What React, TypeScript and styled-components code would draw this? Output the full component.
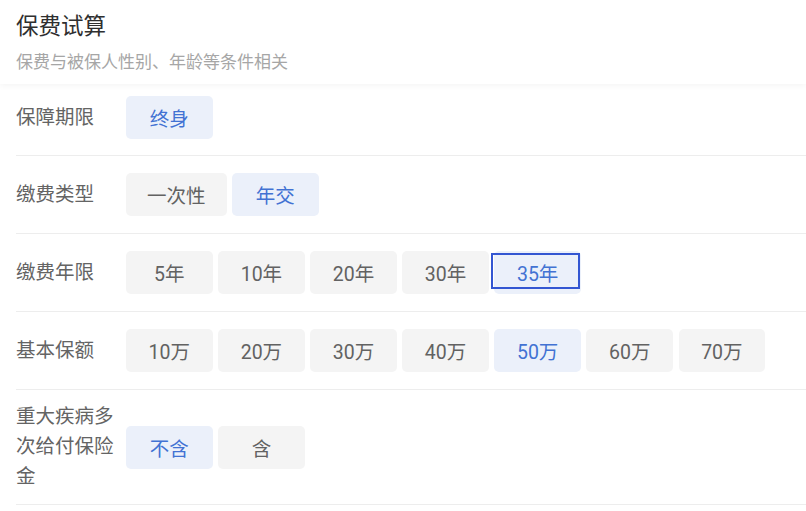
import React from "react";
import styled, { createGlobalStyle } from "styled-components";

const Global = createGlobalStyle`
  html, body { margin: 0; padding: 0; background: #fff; }
  body { font-family: Roboto, "Noto Sans CJK SC", sans-serif; }
  *, *::before, *::after { box-sizing: border-box; }
`;

const Page = styled.div`
  width: 806px;
  height: 511px;
  overflow: hidden;
  background: #fff;
`;

const Header = styled.header`
  height: 84px;
  padding: 11px 16px 0;
  box-shadow: 0 2px 6px rgba(0, 0, 0, 0.045);
  position: relative;
  z-index: 1;
`;

const Title = styled.h1`
  margin: 0;
  font-size: 22.5px;
  line-height: 30px;
  font-weight: 400;
  color: #2f2f2f;
`;

const Subtitle = styled.p`
  margin: 9px 0 0;
  font-size: 17px;
  line-height: 24px;
  color: #a6a6a6;
`;

const List = styled.div`
  padding-left: 16px;
`;

const Row = styled.div<{ $first?: boolean }>`
  display: flex;
  align-items: center;
  border-bottom: 1px solid #ededed;
  min-height: ${(p) => (p.$first ? "72px" : "78px")};
  padding: ${(p) => (p.$first ? "12px 0 16px" : "12px 0")};
`;

const Label = styled.div`
  width: 110px;
  flex: none;
  padding-right: 8px;
  font-size: 19.5px;
  line-height: 30px;
  color: #646464;
`;

const Options = styled.div`
  display: flex;
  gap: 5.5px;
`;

const Option = styled.button<{ $active?: boolean; $focused?: boolean }>`
  position: relative;
  min-width: 86.6px;
  height: 43px;
  padding: 0 21px;
  border: none;
  border-radius: 5px;
  font-family: inherit;
  font-size: 19.5px;
  color: ${(p) => (p.$active ? "#4272d3" : "#626262")};
  background: ${(p) => (p.$active ? "#ebf0fa" : "#f4f4f4")};
  cursor: pointer;
  &::after {
    content: "";
    display: ${(p) => (p.$focused ? "block" : "none")};
    position: absolute;
    left: -3px;
    top: 2px;
    width: 89px;
    height: 36px;
    border: 2.7px solid #3356d2;
  }
`;

type RowData = {
  label: string;
  options: string[];
  active: number;
  focused?: number;
};

const rows: RowData[] = [
  { label: "保障期限", options: ["终身"], active: 0 },
  { label: "缴费类型", options: ["一次性", "年交"], active: 1 },
  { label: "缴费年限", options: ["5年", "10年", "20年", "30年", "35年"], active: 4, focused: 4 },
  { label: "基本保额", options: ["10万", "20万", "30万", "40万", "50万", "60万", "70万"], active: 4 },
  { label: "重大疾病多次给付保险金", options: ["不含", "含"], active: 0 },
];

export default function App() {
  return (
    <Page>
      <Global />
      <Header>
        <Title>保费试算</Title>
        <Subtitle>保费与被保人性别、年龄等条件相关</Subtitle>
      </Header>
      <List>
        {rows.map((r, i) => (
          <Row key={r.label} $first={i === 0}>
            <Label>{r.label}</Label>
            <Options>
              {r.options.map((o, j) => (
                <Option key={o} $active={j === r.active} $focused={j === r.focused}>
                  {o}
                </Option>
              ))}
            </Options>
          </Row>
        ))}
      </List>
    </Page>
  );
}
